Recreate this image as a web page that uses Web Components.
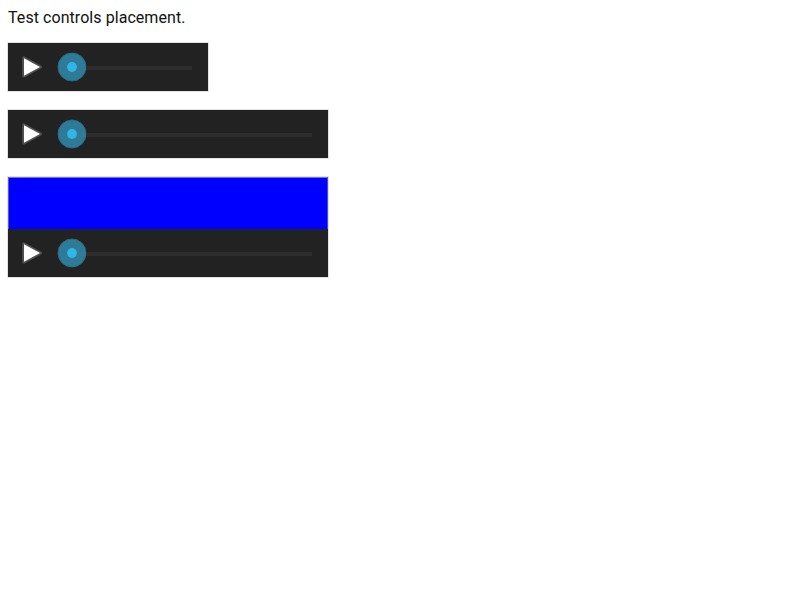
<!DOCTYPE html>
<html lang="en">
<head>
<meta charset="utf-8">
<title>Controls placement</title>
<style>
body { margin: 0; background: #fff; }
</style>
</head>
<body>
<test-page>
  <media-player style="--width: 200px"></media-player>
  <media-player style="--width: 320px"></media-player>
  <media-player video style="--width: 320px"></media-player>
</test-page>
<script>
class MediaControls extends HTMLElement {
  constructor() {
    super();
    this.attachShadow({ mode: 'open' }).innerHTML = `
      <style>
        :host { display: flex; align-items: center; height: 48px; box-sizing: border-box; padding-right: 16px; background: #222; }
        svg { display: block; flex: none; width: 48px; height: 48px; }
        .slider { display: flex; align-items: center; flex: 1; }
        .thumb { width: 32px; margin-right: -2px; }
        .track { flex: 1; height: 4px; margin-top: 2px; background: #2d2d2d; }
      </style>
      <svg viewBox="0 0 48 48"><path d="M15.7 14.9V33.1L32.6 24Z" fill="#fff" stroke="#505050" stroke-width="3" stroke-linejoin="round"/><path d="M16 15.3V32.7L32 24Z" fill="#fff"/></svg>
      <div class="slider">
        <svg class="thumb" viewBox="0 0 32 48"><circle cx="16" cy="24" r="14" fill="#2d7b97" stroke="#296c84" stroke-width=".9"/><path d="M16 23H30V27H16Z" fill="#337b95"/><circle cx="16" cy="24" r="4.9" fill="#33b5e5"/></svg>
        <div class="track"></div>
      </div>`;
  }
}
customElements.define('media-controls', MediaControls);

class MediaPlayer extends HTMLElement {
  constructor() {
    super();
    this.attachShadow({ mode: 'open' }).innerHTML = `
      <style>
        :host { display: block; width: var(--width); box-shadow: 0 0 0 1px #e3e3e3; }
        .screen { display: none; }
        :host([video]) .screen { display: block; box-sizing: border-box; height: 52px; background: #00f; border: 1px solid #7474cd; border-left-color: #5555dd; border-right-color: #4444ff; border-bottom: 0; }
      </style>
      <div class="screen"></div>
      <media-controls></media-controls>`;
  }
}
customElements.define('media-player', MediaPlayer);

class TestPage extends HTMLElement {
  constructor() {
    super();
    this.attachShadow({ mode: 'open' }).innerHTML = `
      <style>
        :host { display: block; padding: 8px; font: 16px/19px Roboto, sans-serif; color: #111; }
        p { margin: 0 0 16px; letter-spacing: .06px; }
        .list { display: flex; flex-direction: column; align-items: flex-start; gap: 19px; }
      </style>
      <p>Test controls placement.</p>
      <div class="list"><slot></slot></div>`;
  }
}
customElements.define('test-page', TestPage);
</script>
</body>
</html>
